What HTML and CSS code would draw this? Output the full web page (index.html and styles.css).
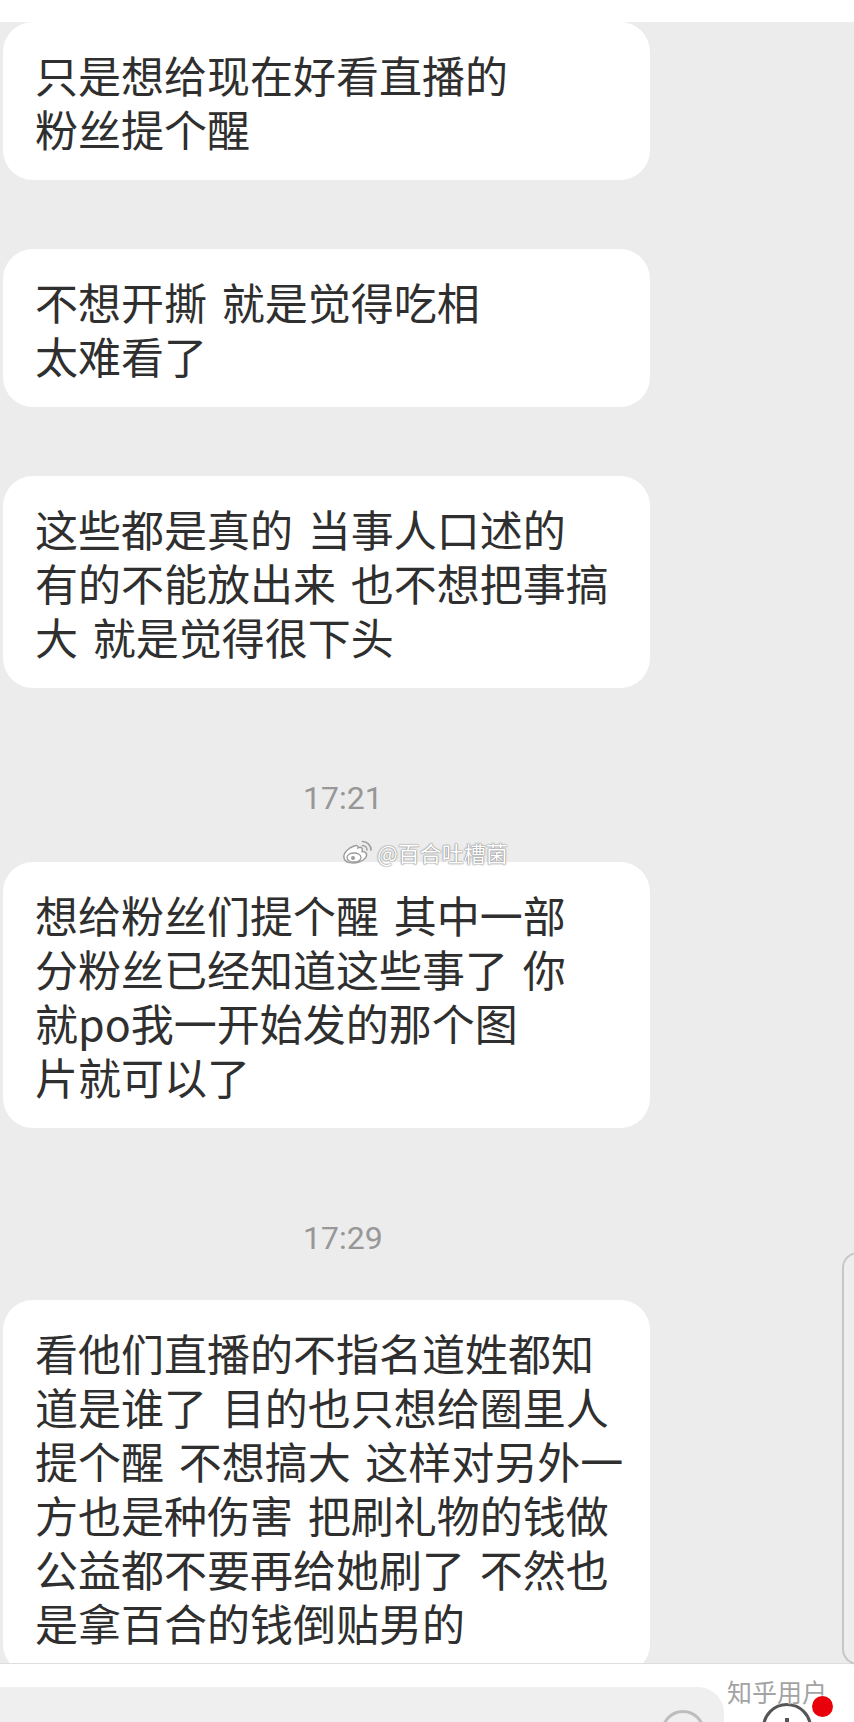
FILE: index.html
```html
<!DOCTYPE html>
<html lang="zh-CN">
<head>
  <meta charset="UTF-8">
  <meta name="viewport" content="width=device-width, initial-scale=1.0">
  <title>聊天记录</title>
  <link rel="stylesheet" href="styles.css">
</head>
<body>
  <div class="screen">
    <div class="status"></div>

    <div class="chat">
      <div class="bubble">只是想给现在好看直播的<br>粉丝提个醒</div>
      <div class="bubble">不想开撕 就是觉得吃相<br>太难看了</div>
      <div class="bubble">这些都是真的 当事人口述的<br>有的不能放出来 也不想把事搞<br>大 就是觉得很下头</div>

      <div class="time">17:21</div>

      <div class="bubble">想给粉丝们提个醒 其中一部<br>分粉丝已经知道这些事了 你<br>就po我一开始发的那个图<br>片就可以了</div>

      <div class="time">17:29</div>

      <div class="bubble">看他们直播的不指名道姓都知<br>道是谁了 目的也只想给圈里人<br>提个醒 不想搞大 这样对另外一<br>方也是种伤害 把刷礼物的钱做<br>公益都不要再给她刷了 不然也<br>是拿百合的钱倒贴男的</div>
    </div>

    <div class="inputbar">
      <div class="field">
        <span class="circle circle-emoji"></span>
      </div>
      <div class="more">
        <span class="circle circle-more"></span>
        <span class="dot"></span>
      </div>
    </div>

    <!-- side drawer handle on the right edge -->
    <div class="drawer"></div>

    <!-- watermarks -->
    <div class="mark-weibo">
      <svg width="32" height="26" viewBox="0 0 32 26">
        <path d="M13 7 C7 9 2 14 3 19 C4 24 12 25 18 23 C24 21 27 17 25 14 C24 12.5 22.5 12.5 21 12.5 C22.5 9.5 20 7 17 9 C17.5 6.5 15.5 6 13 7 Z" fill="#fff" stroke="#9c9c9c" stroke-width="1.4"/>
        <ellipse cx="13" cy="18.5" rx="7" ry="4.5" fill="none" stroke="#9c9c9c" stroke-width="1.3"/>
        <circle cx="12" cy="19" r="2" fill="#9c9c9c"/>
        <path d="M21.5 2.5 A8.5 8.5 0 0 1 30 11" fill="none" stroke="#9c9c9c" stroke-width="1.7" stroke-linecap="round"/>
        <path d="M21.5 6.5 A4.5 4.5 0 0 1 26 11" fill="none" stroke="#9c9c9c" stroke-width="1.5" stroke-linecap="round"/>
      </svg>
      <span>@百合吐槽菌</span>
    </div>
    <div class="mark-zhihu">知乎用户</div>
  </div>
</body>
</html>
```

FILE: styles.css
```css
* {
  box-sizing: border-box;
}
body {
  margin: 0;
  background: #ececec;
  font-family: "Noto Sans CJK SC", Roboto, sans-serif;
  color: #2f2f2f;
}
.screen {
  position: relative;
  width: 854px;
  height: 1722px;
  overflow: hidden;
}
.status {
  height: 22px;
  background: #ffffff;
}
.chat {
  height: 1641px;
  overflow: hidden;
  display: flex;
  flex-direction: column;
  padding-left: 3px;
}
.bubble {
  flex: none;
  width: 647px;
  padding: 25px 0 25px 32px;
  margin-bottom: 69px;
  background: #ffffff;
  border-radius: 30px;
  font-size: 43px;
  line-height: 54px;
  word-spacing: 5px;
  white-space: nowrap;
}
.time + .bubble {
  margin-top: 0;
}
.chat .bubble:nth-child(3) {
  margin-bottom: 0;
}
.time {
  flex: none;
  margin: 90px 0 44px;
  padding-left: 300px;
  height: 40px;
  font-family: Roboto, sans-serif;
  font-size: 32px;
  line-height: 40px;
  color: #979797;
}
.chat .bubble:nth-child(5) {
  margin-bottom: 0;
}
.chat .time:nth-child(6) {
  margin-bottom: 42px;
}
.inputbar {
  display: flex;
  align-items: flex-start;
  height: 59px;
  background: #ffffff;
  border-top: 1px solid #dedede;
}
.field {
  display: flex;
  justify-content: flex-end;
  width: 724px;
  height: 60px;
  margin-top: 23px;
  padding: 23px 19px 0 0;
  background: #efefef;
  border-top-right-radius: 26px;
}
.circle {
  display: block;
  border-radius: 50%;
}
.circle-emoji {
  width: 44px;
  height: 44px;
  border: 3px solid #bdbdbd;
}
.more {
  position: relative;
  margin: 39px 0 0 38px;
}
.circle-more {
  position: relative;
  width: 50px;
  height: 50px;
  border: 3px solid #555555;
}
.circle-more::after {
  content: "";
  position: absolute;
  left: 20px;
  top: 12px;
  width: 4px;
  height: 20px;
  background: #555555;
}
.dot {
  position: absolute;
  left: 50px;
  top: -7px;
  width: 21px;
  height: 21px;
  border-radius: 50%;
  background: #e8000b;
  z-index: 2;
}
.drawer {
  position: absolute;
  left: 842px;
  top: 1252px;
  width: 20px;
  height: 413px;
  background: #eeeeee;
  border: 2px solid #c6c6c6;
  border-right: 0;
  border-radius: 16px 0 0 16px;
}
.mark-weibo {
  position: absolute;
  left: 341px;
  top: 838px;
  display: flex;
  align-items: center;
  gap: 4px;
  font-size: 22px;
  line-height: 28px;
  color: #ffffff;
  text-shadow: 0 0 1px #8a8a8a, 0 0 1px #8a8a8a, 0 0 2px #9a9a9a;
}
.mark-zhihu {
  position: absolute;
  left: 727px;
  top: 1676px;
  font-size: 25px;
  line-height: 30px;
  color: #a3a3a3;
  text-shadow: 0 0 1px #ffffff, 0 0 1px #ffffff;
  z-index: 1;
}
```
